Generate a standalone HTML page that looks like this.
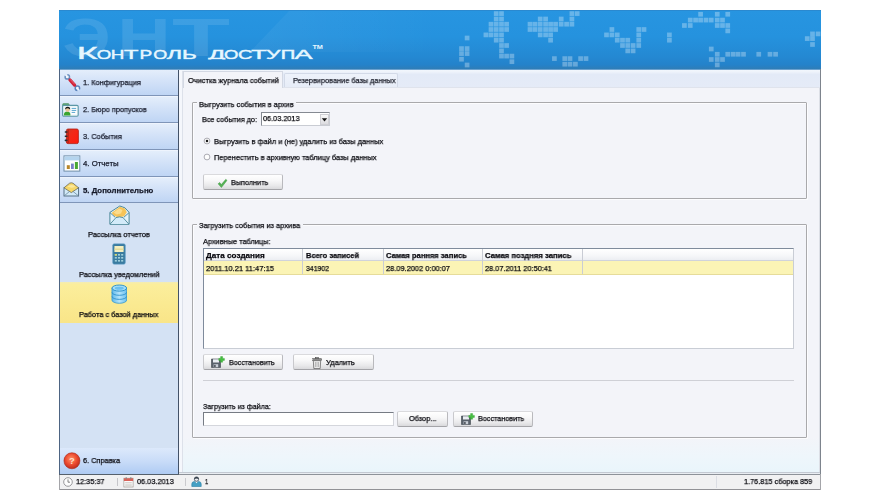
<!DOCTYPE html>
<html lang="ru"><head><meta charset="utf-8"><title>Контроль доступа</title><style>
html,body{margin:0;padding:0;background:#fff;}
body{width:880px;height:500px;position:relative;overflow:hidden;font-family:"Liberation Sans", sans-serif;}
.t{position:absolute;white-space:nowrap;-webkit-text-stroke:0.25px currentColor;will-change:transform;line-height:12px;height:12px;transform-origin:0 50%;font-family:"Liberation Sans", sans-serif;}
</style></head>
<body>
<div style="position:absolute;left:59.00px;top:10.00px;width:762.00px;height:59.00px;background:linear-gradient(#2795e1 0%,#2592de 45%,#2488d2 80%,#2482ca 93%,#2a7fbf 97%,#2f7db6 100%);overflow:hidden"></div>
<svg style="position:absolute;left:0;top:0" width="880" height="500" viewBox="0 0 880 500">
<g fill="#ffffff" fill-opacity="0.30">
<rect x="464.75" y="35.65" width="4.7" height="4.7"/>
<rect x="459.15" y="46.25" width="4.7" height="4.7"/>
<rect x="464.75" y="46.25" width="4.7" height="4.7"/>
<rect x="459.15" y="51.25" width="4.7" height="4.7"/>
<rect x="464.75" y="51.25" width="4.7" height="4.7"/>
<rect x="459.15" y="56.85" width="4.7" height="4.7"/>
<rect x="464.75" y="62.65" width="4.7" height="4.7"/>
<rect x="493.85" y="11.25" width="4.7" height="4.7"/>
<rect x="499.15" y="11.25" width="4.7" height="4.7"/>
<rect x="493.85" y="16.65" width="4.7" height="4.7"/>
<rect x="499.15" y="16.65" width="4.7" height="4.7"/>
<rect x="488.65" y="21.85" width="4.7" height="4.7"/>
<rect x="493.85" y="21.85" width="4.7" height="4.7"/>
<rect x="499.15" y="21.85" width="4.7" height="4.7"/>
<rect x="504.25" y="21.85" width="4.7" height="4.7"/>
<rect x="488.65" y="27.15" width="4.7" height="4.7"/>
<rect x="493.85" y="27.15" width="4.7" height="4.7"/>
<rect x="499.15" y="27.15" width="4.7" height="4.7"/>
<rect x="504.25" y="27.15" width="4.7" height="4.7"/>
<rect x="483.55" y="32.55" width="4.7" height="4.7"/>
<rect x="488.65" y="32.55" width="4.7" height="4.7"/>
<rect x="493.85" y="32.55" width="4.7" height="4.7"/>
<rect x="499.15" y="32.55" width="4.7" height="4.7"/>
<rect x="493.85" y="37.85" width="4.7" height="4.7"/>
<rect x="499.15" y="37.85" width="4.7" height="4.7"/>
<rect x="499.15" y="43.15" width="4.7" height="4.7"/>
<rect x="504.25" y="43.15" width="4.7" height="4.7"/>
<rect x="499.15" y="48.55" width="4.7" height="4.7"/>
<rect x="499.15" y="53.75" width="4.7" height="4.7"/>
<rect x="504.25" y="53.75" width="4.7" height="4.7"/>
<rect x="509.55" y="53.75" width="4.7" height="4.7"/>
<rect x="509.55" y="59.35" width="4.7" height="4.7"/>
<rect x="569.55" y="11.25" width="4.7" height="4.7"/>
<rect x="574.85" y="11.25" width="4.7" height="4.7"/>
<rect x="537.85" y="16.65" width="4.7" height="4.7"/>
<rect x="543.25" y="16.65" width="4.7" height="4.7"/>
<rect x="558.85" y="16.65" width="4.7" height="4.7"/>
<rect x="569.55" y="16.65" width="4.7" height="4.7"/>
<rect x="527.65" y="21.85" width="4.7" height="4.7"/>
<rect x="532.65" y="21.85" width="4.7" height="4.7"/>
<rect x="537.85" y="21.85" width="4.7" height="4.7"/>
<rect x="543.25" y="21.85" width="4.7" height="4.7"/>
<rect x="548.25" y="21.85" width="4.7" height="4.7"/>
<rect x="553.25" y="21.85" width="4.7" height="4.7"/>
<rect x="558.85" y="21.85" width="4.7" height="4.7"/>
<rect x="564.25" y="21.85" width="4.7" height="4.7"/>
<rect x="569.55" y="21.85" width="4.7" height="4.7"/>
<rect x="527.65" y="27.15" width="4.7" height="4.7"/>
<rect x="532.65" y="27.15" width="4.7" height="4.7"/>
<rect x="537.85" y="27.15" width="4.7" height="4.7"/>
<rect x="543.25" y="27.15" width="4.7" height="4.7"/>
<rect x="548.25" y="27.15" width="4.7" height="4.7"/>
<rect x="553.25" y="27.15" width="4.7" height="4.7"/>
<rect x="537.85" y="32.55" width="4.7" height="4.7"/>
<rect x="543.25" y="32.55" width="4.7" height="4.7"/>
<rect x="548.25" y="32.55" width="4.7" height="4.7"/>
<rect x="548.25" y="37.85" width="4.7" height="4.7"/>
<rect x="552.05" y="56.25" width="4.7" height="4.7"/>
<rect x="562.40" y="56.25" width="4.7" height="4.7"/>
<rect x="567.65" y="56.25" width="4.7" height="4.7"/>
<rect x="578.25" y="56.25" width="4.7" height="4.7"/>
<rect x="583.65" y="56.25" width="4.7" height="4.7"/>
<rect x="562.40" y="61.85" width="4.7" height="4.7"/>
<rect x="567.65" y="61.85" width="4.7" height="4.7"/>
<rect x="573.05" y="61.85" width="4.7" height="4.7"/>
<rect x="609.55" y="27.15" width="4.7" height="4.7"/>
<rect x="636.40" y="27.15" width="4.7" height="4.7"/>
<rect x="641.65" y="27.15" width="4.7" height="4.7"/>
<rect x="604.15" y="32.55" width="4.7" height="4.7"/>
<rect x="609.55" y="32.55" width="4.7" height="4.7"/>
<rect x="614.90" y="32.55" width="4.7" height="4.7"/>
<rect x="636.40" y="32.55" width="4.7" height="4.7"/>
<rect x="614.90" y="37.85" width="4.7" height="4.7"/>
<rect x="620.15" y="37.85" width="4.7" height="4.7"/>
<rect x="625.40" y="37.85" width="4.7" height="4.7"/>
<rect x="636.40" y="37.85" width="4.7" height="4.7"/>
<rect x="620.15" y="43.15" width="4.7" height="4.7"/>
<rect x="625.40" y="43.15" width="4.7" height="4.7"/>
<rect x="630.75" y="43.15" width="4.7" height="4.7"/>
<rect x="636.40" y="43.15" width="4.7" height="4.7"/>
<rect x="625.40" y="48.55" width="4.7" height="4.7"/>
<rect x="630.75" y="48.55" width="4.7" height="4.7"/>
<rect x="667.05" y="32.55" width="4.7" height="4.7"/>
<rect x="667.05" y="37.85" width="4.7" height="4.7"/>
<rect x="698.25" y="11.90" width="4.7" height="4.7"/>
<rect x="714.90" y="11.90" width="4.7" height="4.7"/>
<rect x="725.40" y="11.90" width="4.7" height="4.7"/>
<rect x="687.90" y="17.75" width="4.7" height="4.7"/>
<rect x="693.25" y="17.75" width="4.7" height="4.7"/>
<rect x="698.25" y="17.75" width="4.7" height="4.7"/>
<rect x="703.65" y="17.75" width="4.7" height="4.7"/>
<rect x="708.90" y="17.75" width="4.7" height="4.7"/>
<rect x="714.90" y="17.75" width="4.7" height="4.7"/>
<rect x="720.15" y="17.75" width="4.7" height="4.7"/>
<rect x="682.05" y="23.15" width="4.7" height="4.7"/>
<rect x="687.90" y="23.15" width="4.7" height="4.7"/>
<rect x="714.90" y="23.15" width="4.7" height="4.7"/>
<rect x="720.15" y="23.15" width="4.7" height="4.7"/>
<rect x="725.40" y="23.15" width="4.7" height="4.7"/>
<rect x="725.40" y="28.55" width="4.7" height="4.7"/>
<rect x="708.90" y="46.65" width="4.7" height="4.7"/>
<rect x="714.90" y="51.90" width="4.7" height="4.7"/>
<rect x="725.40" y="51.90" width="4.7" height="4.7"/>
<rect x="730.75" y="51.90" width="4.7" height="4.7"/>
<rect x="735.75" y="51.90" width="4.7" height="4.7"/>
<rect x="741.15" y="51.90" width="4.7" height="4.7"/>
<rect x="756.40" y="51.90" width="4.7" height="4.7"/>
<rect x="767.65" y="51.90" width="4.7" height="4.7"/>
<rect x="773.25" y="51.90" width="4.7" height="4.7"/>
<rect x="708.90" y="57.15" width="4.7" height="4.7"/>
<rect x="714.90" y="57.15" width="4.7" height="4.7"/>
<rect x="720.15" y="57.15" width="4.7" height="4.7"/>
<rect x="714.90" y="62.55" width="4.7" height="4.7"/>
<rect x="810.15" y="31.55" width="4.7" height="4.7"/>
<rect x="815.75" y="31.55" width="4.7" height="4.7"/>
<rect x="804.90" y="36.25" width="4.7" height="4.7"/>
<rect x="810.15" y="36.25" width="4.7" height="4.7"/>
<rect x="810.15" y="42.15" width="4.7" height="4.7"/>
</g>
<defs><linearGradient id="gl" x1="0" y1="0" x2="1" y2="0"><stop offset="0" stop-color="#fff" stop-opacity="0.05"/><stop offset="1" stop-color="#fff" stop-opacity="0"/></linearGradient></defs>
<polygon points="290,10 440,10 440,52 250,52" fill="url(#gl)"/>
<g fill="#ffffff" fill-opacity="0.11" font-family='"Liberation Sans", sans-serif' font-weight="bold" font-size="54">
<text x="62.5" y="55.5" textLength="48.0" lengthAdjust="spacingAndGlyphs">Э</text>
<text x="117.5" y="55.5" textLength="53.0" lengthAdjust="spacingAndGlyphs">Н</text>
<text x="172" y="55.5" textLength="58" lengthAdjust="spacingAndGlyphs">Т</text>
</g>
<defs><clipPath id="tc"><rect x="70" y="40" width="260" height="19.5"/></clipPath></defs>
<g fill="#e6f7ff" clip-path="url(#tc)" font-family='"Liberation Sans", sans-serif'>
<text x="76.71" y="58.7" font-size="17.3" textLength="20.98" lengthAdjust="spacingAndGlyphs" stroke="#e6f7ff" stroke-width="0.4">К</text>
<text x="96.69" y="58.7" font-size="12.8" textLength="14.52" lengthAdjust="spacingAndGlyphs" stroke="#e6f7ff" stroke-width="0.4">О</text>
<text x="110.88" y="58.7" font-size="12.8" textLength="13.54" lengthAdjust="spacingAndGlyphs" stroke="#e6f7ff" stroke-width="0.4">Н</text>
<text x="124.10" y="58.7" font-size="12.8" textLength="14.40" lengthAdjust="spacingAndGlyphs" stroke="#e6f7ff" stroke-width="0.4">Т</text>
<text x="139.46" y="58.7" font-size="12.8" textLength="12.69" lengthAdjust="spacingAndGlyphs" stroke="#e6f7ff" stroke-width="0.4">Р</text>
<text x="153.24" y="58.7" font-size="12.8" textLength="14.03" lengthAdjust="spacingAndGlyphs" stroke="#e6f7ff" stroke-width="0.4">О</text>
<text x="166.81" y="58.7" font-size="12.8" textLength="15.37" lengthAdjust="spacingAndGlyphs" stroke="#e6f7ff" stroke-width="0.4">Л</text>
<text x="182.07" y="58.7" font-size="12.8" textLength="14.76" lengthAdjust="spacingAndGlyphs" stroke="#e6f7ff" stroke-width="0.4">Ь</text>
<text x="208.26" y="58.7" font-size="12.8" textLength="17.08" lengthAdjust="spacingAndGlyphs" stroke="#e6f7ff" stroke-width="0.4">Д</text>
<text x="224.00" y="58.7" font-size="12.8" textLength="14.40" lengthAdjust="spacingAndGlyphs" stroke="#e6f7ff" stroke-width="0.4">О</text>
<text x="238.00" y="58.7" font-size="12.8" textLength="14.40" lengthAdjust="spacingAndGlyphs" stroke="#e6f7ff" stroke-width="0.4">С</text>
<text x="251.21" y="58.7" font-size="12.8" textLength="15.37" lengthAdjust="spacingAndGlyphs" stroke="#e6f7ff" stroke-width="0.4">Т</text>
<text x="266.10" y="58.7" font-size="12.8" textLength="14.40" lengthAdjust="spacingAndGlyphs" stroke="#e6f7ff" stroke-width="0.4">У</text>
<text x="280.79" y="58.7" font-size="12.8" textLength="14.52" lengthAdjust="spacingAndGlyphs" stroke="#e6f7ff" stroke-width="0.4">П</text>
<text x="294.57" y="58.7" font-size="12.8" textLength="18.06" lengthAdjust="spacingAndGlyphs" stroke="#e6f7ff" stroke-width="0.4">А</text>
<text x="312.4" y="49.3" font-size="5.4" font-weight="bold" textLength="10.6" lengthAdjust="spacingAndGlyphs">TM</text>
</g>
</svg>
<div style="position:absolute;left:59.00px;top:69.00px;width:120.00px;height:405.00px;background:#d4e2f4"></div>
<div style="position:absolute;left:59.00px;top:69.00px;width:120.00px;height:27.00px;background:linear-gradient(#e4eefb 0%,#d3e2f8 45%,#bfd5f4 100%);border-top:1px solid #eef4fd;border-bottom:1px solid #7f95b8;box-sizing:border-box"></div>
<span class="t " style="left:83.40px;top:77.32px;font-size:7.8px;color:#161a2a;transform:scaleX(0.9508)">1. Конфигурация</span>
<div style="position:absolute;left:59.00px;top:96.00px;width:120.00px;height:27.00px;background:linear-gradient(#e4eefb 0%,#d3e2f8 45%,#bfd5f4 100%);border-top:1px solid #eef4fd;border-bottom:1px solid #7f95b8;box-sizing:border-box"></div>
<span class="t " style="left:83.40px;top:104.32px;font-size:7.8px;color:#161a2a;transform:scaleX(0.9453)">2. Бюро пропусков</span>
<div style="position:absolute;left:59.00px;top:123.00px;width:120.00px;height:27.00px;background:linear-gradient(#e4eefb 0%,#d3e2f8 45%,#bfd5f4 100%);border-top:1px solid #eef4fd;border-bottom:1px solid #7f95b8;box-sizing:border-box"></div>
<span class="t " style="left:83.40px;top:131.32px;font-size:7.8px;color:#161a2a;transform:scaleX(0.9520)">3. События</span>
<div style="position:absolute;left:59.00px;top:150.00px;width:120.00px;height:27.00px;background:linear-gradient(#e4eefb 0%,#d3e2f8 45%,#bfd5f4 100%);border-top:1px solid #eef4fd;border-bottom:1px solid #7f95b8;box-sizing:border-box"></div>
<span class="t " style="left:83.40px;top:158.32px;font-size:7.8px;color:#161a2a;transform:scaleX(0.9993)">4. Отчеты</span>
<div style="position:absolute;left:59.00px;top:177.00px;width:120.00px;height:26.00px;background:linear-gradient(#e4eefb 0%,#d3e2f8 45%,#bfd5f4 100%);border-top:1px solid #eef4fd;border-bottom:1px solid #7f95b8;box-sizing:border-box"></div>
<span class="t " style="left:83.40px;top:184.82px;font-size:7.8px;font-weight:bold;color:#161a2a;transform:scaleX(1.0030)">5. Дополнительно</span>
<div style="position:absolute;left:59.00px;top:281.50px;width:120.00px;height:41.50px;background:linear-gradient(#f3ecb4 0%,#fbee9c 6%,#faea92 50%,#f9e588 100%)"></div>
<span class="t " style="left:88.00px;top:229.42px;font-size:7.8px;color:#08080e;transform:scaleX(0.9485)">Рассылка отчетов</span>
<span class="t " style="left:78.80px;top:268.92px;font-size:7.8px;color:#08080e;transform:scaleX(0.9417)">Рассылка уведомлений</span>
<span class="t " style="left:79.40px;top:309.22px;font-size:7.8px;color:#08080e;transform:scaleX(0.9458)">Работа с базой данных</span>
<div style="position:absolute;left:59.00px;top:448.00px;width:120.00px;height:26.00px;background:linear-gradient(#dce9fb 0%,#c9dcf8 50%,#afcbf3 100%)"></div>
<span class="t " style="left:83.00px;top:455.02px;font-size:7.8px;color:#08080e;transform:scaleX(0.9423)">6. Справка</span>
<div style="position:absolute;left:59.00px;top:69.00px;width:1.00px;height:421.00px;background:#4d6482"></div>
<div style="position:absolute;left:178.00px;top:69.00px;width:1.00px;height:405.00px;background:#435268"></div>
<div style="position:absolute;left:179.00px;top:69.00px;width:642.00px;height:404.00px;background:linear-gradient(#f3f4f9 0%,#f3f4f9 91%,#eef6fb 96%,#e9f5fb 100%)"></div>
<div style="position:absolute;left:179.00px;top:69.00px;width:642.00px;height:19.00px;background:linear-gradient(#f4f8fd 0%,#eef3fb 15%,#e3eaf7 28%,#e5ebf7 100%)"></div>
<div style="position:absolute;left:284.00px;top:73.00px;width:114.00px;height:15.00px;background:linear-gradient(#eef3fb,#e6ecf7);border:1px solid #d3dae8;border-bottom:none;border-radius:2px 2px 0 0;box-sizing:border-box"></div>
<div style="position:absolute;left:59.00px;top:69.00px;width:762.00px;height:1.00px;background:#6aa1cf"></div>
<div style="position:absolute;left:59.00px;top:10.00px;width:762.00px;height:1.00px;background:#2a89d0"></div>
<div style="position:absolute;left:182.50px;top:71.00px;width:100.90px;height:17.00px;background:#f3f4f9;border:1px solid #d3d8e3;border-bottom:none;box-sizing:border-box"></div>
<div style="position:absolute;left:283.40px;top:87.00px;width:537.60px;height:1.00px;background:#dfe3ec"></div>
<span class="t " style="left:188.00px;top:75.12px;font-size:7.8px;color:#08080e;transform:scaleX(0.9483)">Очистка журнала событий</span>
<span class="t " style="left:292.80px;top:75.12px;font-size:7.8px;color:#1c1f2b;transform:scaleX(0.9421)">Резервирование базы данных</span>
<div style="position:absolute;left:179.00px;top:70.00px;width:3.00px;height:403.00px;background:#f5f7fc"></div>
<div style="position:absolute;left:182.00px;top:71.00px;width:1.00px;height:401.00px;background:#dde1ea"></div>
<div style="position:absolute;left:818.50px;top:88.00px;width:1.00px;height:385.00px;background:#dcdfe6"></div>
<div style="position:absolute;left:192.00px;top:102.00px;width:615.00px;height:97.00px;border:1px solid #a9a9ac;box-sizing:border-box;border-radius:1px;box-shadow:1px 1px 0 #fcfcfe, inset 1px 1px 0 #fcfcfe"></div>
<div style="position:absolute;left:196.50px;top:97.00px;width:99.00px;height:12.00px;background:#f3f4f9"></div>
<span class="t " style="left:198.60px;top:98.62px;font-size:7.8px;color:#08080e;transform:scaleX(0.9505)">Выгрузить события в архив</span>
<span class="t " style="left:202.00px;top:113.72px;font-size:7.8px;color:#08080e;transform:scaleX(0.9263)">Все события до:</span>
<div style="position:absolute;left:261.00px;top:112.00px;width:69.00px;height:14.00px;background:#fff;border:1px solid #858a92;border-right-color:#c9ccd3;border-bottom-color:#c9ccd3;box-sizing:border-box"></div>
<span class="t " style="left:263.00px;top:113.42px;font-size:7.8px;color:#08080e;transform:scaleX(0.9377)">06.03.2013</span>
<div style="position:absolute;left:320.00px;top:114.00px;width:9.00px;height:11.00px;background:linear-gradient(#f8f8f8,#dcdce0);border:1px solid #cfcfd4;box-sizing:border-box"></div>
<svg style="position:absolute;left:320px;top:114px" width="9" height="11"><path d="M1.8 4.2 L7.2 4.2 L4.5 7.4 Z" fill="#151515"/></svg>
<svg style="position:absolute;left:201.00px;top:135.40px" width="12" height="12"><circle cx="6" cy="6" r="2.9" fill="#fdfdfd" stroke="#a3a3aa" stroke-width="0.9"/><circle cx="6" cy="6" r="1.25" fill="#1a1a1a"/></svg>
<svg style="position:absolute;left:201.00px;top:151.10px" width="12" height="12"><circle cx="6" cy="6" r="2.9" fill="#fdfdfd" stroke="#a3a3aa" stroke-width="0.9"/></svg>
<span class="t " style="left:213.80px;top:136.22px;font-size:7.8px;color:#08080e;transform:scaleX(0.9485)">Выгрузить в файл и (не) удалить из базы данных</span>
<span class="t " style="left:213.80px;top:151.82px;font-size:7.8px;color:#08080e;transform:scaleX(0.9523)">Перенестить в архивную таблицу базы данных</span>
<div style="position:absolute;left:203.00px;top:174.00px;width:80.00px;height:16.00px;background:linear-gradient(#ffffff 0%,#f7f7f8 40%,#e9e9eb 75%,#d9d9dc 100%);border:1px solid #c9c9cd;border-top-color:#dadadd;border-bottom-color:#a4a4a8;border-right-color:#b9b9bd;box-sizing:border-box;border-radius:2px"></div>
<svg style="position:absolute;left:217px;top:177.6px" width="11" height="11" viewBox="0 0 12 12"><path d="M1.2 6.4 L2.9 4.9 L4.7 7.2 L9.6 1.4 L10.9 2.6 L4.8 10.4 Z" fill="#55b254" stroke="#3a9640" stroke-width="0.5"/></svg>
<span class="t " style="left:231.30px;top:176.82px;font-size:7.8px;color:#08080e;transform:scaleX(0.9289)">Выполнить</span>
<div style="position:absolute;left:192.00px;top:224.00px;width:615.00px;height:214.00px;border:1px solid #a9a9ac;box-sizing:border-box;border-radius:1px;box-shadow:1px 1px 0 #fcfcfe, inset 1px 1px 0 #fcfcfe"></div>
<div style="position:absolute;left:196.50px;top:219.00px;width:106.00px;height:12.00px;background:#f3f4f9"></div>
<span class="t " style="left:198.80px;top:220.02px;font-size:7.8px;color:#08080e;transform:scaleX(0.9564)">Загрузить события из архива</span>
<span class="t " style="left:202.50px;top:236.02px;font-size:7.8px;color:#08080e;transform:scaleX(0.9461)">Архивные таблицы:</span>
<div style="position:absolute;left:203.00px;top:248.00px;width:591.00px;height:101.00px;background:#fff;border:1px solid #7f8b9c;border-right-color:#c9cdd5;border-bottom-color:#c9cdd5;box-sizing:border-box"></div>
<div style="position:absolute;left:204.00px;top:249.00px;width:589.00px;height:12.00px;background:linear-gradient(#ffffff,#f6f7f9 60%,#eceef2);border-bottom:1px solid #d0d3db;box-sizing:border-box"></div>
<div style="position:absolute;left:204.00px;top:261.00px;width:589.00px;height:14.00px;background:#fbf4b5;border-bottom:1px solid #e6dc9a;box-sizing:border-box"></div>
<div style="position:absolute;left:302.00px;top:249.00px;width:1.00px;height:25.00px;background:#c9ccd4"></div>
<div style="position:absolute;left:383.00px;top:249.00px;width:1.00px;height:25.00px;background:#c9ccd4"></div>
<div style="position:absolute;left:482.00px;top:249.00px;width:1.00px;height:25.00px;background:#c9ccd4"></div>
<div style="position:absolute;left:582.00px;top:249.00px;width:1.00px;height:25.00px;background:#c9ccd4"></div>
<span class="t " style="left:205.80px;top:250.02px;font-size:7.8px;font-weight:bold;color:#08080e;transform:scaleX(1.0404)">Дата создания</span>
<span class="t " style="left:305.80px;top:250.02px;font-size:7.8px;font-weight:bold;color:#08080e;transform:scaleX(0.9555)">Всего записей</span>
<span class="t " style="left:385.50px;top:250.02px;font-size:7.8px;font-weight:bold;color:#08080e;transform:scaleX(0.9698)">Самая ранняя запись</span>
<span class="t " style="left:485.00px;top:250.02px;font-size:7.8px;font-weight:bold;color:#08080e;transform:scaleX(0.9840)">Самая поздняя запись</span>
<span class="t " style="left:205.80px;top:262.92px;font-size:7.8px;color:#08080e;transform:scaleX(0.9660)">2011.10.21 11:47:15</span>
<span class="t " style="left:305.80px;top:262.92px;font-size:7.8px;color:#08080e;transform:scaleX(0.8836)">341902</span>
<span class="t " style="left:385.50px;top:262.92px;font-size:7.8px;color:#08080e;transform:scaleX(0.9523)">28.09.2002 0:00:07</span>
<span class="t " style="left:485.00px;top:262.92px;font-size:7.8px;color:#08080e;transform:scaleX(0.9441)">28.07.2011 20:50:41</span>
<div style="position:absolute;left:203.00px;top:354.00px;width:80.00px;height:16.00px;background:linear-gradient(#ffffff 0%,#f7f7f8 40%,#e9e9eb 75%,#d9d9dc 100%);border:1px solid #c9c9cd;border-top-color:#dadadd;border-bottom-color:#a4a4a8;border-right-color:#b9b9bd;box-sizing:border-box;border-radius:2px"></div>
<div style="position:absolute;left:293.00px;top:354.00px;width:81.00px;height:16.00px;background:linear-gradient(#ffffff 0%,#f7f7f8 40%,#e9e9eb 75%,#d9d9dc 100%);border:1px solid #c9c9cd;border-top-color:#dadadd;border-bottom-color:#a4a4a8;border-right-color:#b9b9bd;box-sizing:border-box;border-radius:2px"></div>
<svg style="position:absolute;left:210.80px;top:356.00px" width="15" height="12" viewBox="0 0 15 12"><path d="M0.5 3 H9.5 V11.5 H0.5 Z" fill="#59616b" stroke="#3d444c" stroke-width="0.6"/><rect x="2" y="3.3" width="6" height="3.2" fill="#e9edf2"/><rect x="2.6" y="8.2" width="4.6" height="3" fill="#c9ced6"/><rect x="3.2" y="8.8" width="1.4" height="2.2" fill="#3d444c"/><path d="M9.6 0.6 H11.6 V2.4 H13.4 V4.4 H11.6 V6.2 H9.6 V4.4 H7.8 V2.4 H9.6 Z" fill="#46c040" stroke="#2f9a30" stroke-width="0.4"/></svg>
<span class="t " style="left:228.80px;top:356.82px;font-size:7.8px;color:#08080e;transform:scaleX(0.9151)">Восстановить</span>
<svg style="position:absolute;left:311.80px;top:356.80px" width="10" height="12" viewBox="0 0 10 12"><rect x="3.4" y="0.4" width="3.2" height="1.4" fill="none" stroke="#555" stroke-width="0.7"/><rect x="0.5" y="1.7" width="9" height="1.6" fill="#8a8a8a" stroke="#505050" stroke-width="0.6"/><path d="M1.3 3.6 H8.7 L8.2 11.5 H1.8 Z" fill="#e9e9e9" stroke="#5a5a5a" stroke-width="0.7"/><path d="M3.5 5 V10 M5 5 V10 M6.5 5 V10" stroke="#9a9a9a" stroke-width="0.6"/></svg>
<span class="t " style="left:326.30px;top:356.82px;font-size:7.8px;color:#08080e;transform:scaleX(0.9637)">Удалить</span>
<div style="position:absolute;left:203.00px;top:380.00px;width:591.00px;height:1.00px;background:#cfd0d6"></div>
<span class="t " style="left:202.50px;top:401.22px;font-size:7.8px;color:#08080e;transform:scaleX(0.9158)">Загрузить из файла:</span>
<div style="position:absolute;left:203.00px;top:412.00px;width:191.00px;height:14.00px;background:#fff;border:1px solid #767b84;border-right-color:#d4d6dc;border-bottom-color:#d4d6dc;box-sizing:border-box"></div>
<div style="position:absolute;left:397.00px;top:411.00px;width:51.00px;height:16.00px;background:linear-gradient(#ffffff 0%,#f7f7f8 40%,#e9e9eb 75%,#d9d9dc 100%);border:1px solid #c9c9cd;border-top-color:#dadadd;border-bottom-color:#a4a4a8;border-right-color:#b9b9bd;box-sizing:border-box;border-radius:2px"></div>
<span class="t " style="left:408.80px;top:413.42px;font-size:7.8px;color:#08080e;transform:scaleX(0.9473)">Обзор...</span>
<div style="position:absolute;left:453.00px;top:411.00px;width:80.00px;height:16.00px;background:linear-gradient(#ffffff 0%,#f7f7f8 40%,#e9e9eb 75%,#d9d9dc 100%);border:1px solid #c9c9cd;border-top-color:#dadadd;border-bottom-color:#a4a4a8;border-right-color:#b9b9bd;box-sizing:border-box;border-radius:2px"></div>
<svg style="position:absolute;left:461.00px;top:412.80px" width="15" height="12" viewBox="0 0 15 12"><path d="M0.5 3 H9.5 V11.5 H0.5 Z" fill="#59616b" stroke="#3d444c" stroke-width="0.6"/><rect x="2" y="3.3" width="6" height="3.2" fill="#e9edf2"/><rect x="2.6" y="8.2" width="4.6" height="3" fill="#c9ced6"/><rect x="3.2" y="8.8" width="1.4" height="2.2" fill="#3d444c"/><path d="M9.6 0.6 H11.6 V2.4 H13.4 V4.4 H11.6 V6.2 H9.6 V4.4 H7.8 V2.4 H9.6 Z" fill="#46c040" stroke="#2f9a30" stroke-width="0.4"/></svg>
<span class="t " style="left:478.30px;top:413.42px;font-size:7.8px;color:#08080e;transform:scaleX(0.9252)">Восстановить</span>
<div style="position:absolute;left:59.00px;top:474.00px;width:762.00px;height:16.00px;background:#f1f1f2;border-top:1px solid #8d9299;border-bottom:1px solid #929296;box-sizing:border-box"></div>
<div style="position:absolute;left:179.00px;top:472.00px;width:642.00px;height:1.00px;background:#c3c9d2"></div>
<div style="position:absolute;left:179.00px;top:473.00px;width:642.00px;height:1.00px;background:#e9edf2"></div>
<div style="position:absolute;left:59.00px;top:69.00px;width:1.00px;height:421.00px;background:#4d6482"></div>
<div style="position:absolute;left:59.00px;top:474.00px;width:120.00px;height:1.00px;background:#55606c"></div>
<div style="position:absolute;left:820.00px;top:69.00px;width:1.00px;height:405.00px;background:#7d848d"></div>
<div style="position:absolute;left:820.00px;top:474.00px;width:1.00px;height:16.00px;background:#a4a5a9"></div>
<div style="position:absolute;left:59.00px;top:475.00px;width:1.00px;height:15.00px;background:#a4a5a9"></div>
<svg style="position:absolute;left:61.5px;top:476px" width="12" height="12" viewBox="0 0 12 12"><circle cx="6" cy="6" r="4.3" fill="#fdfdfd" stroke="#8f8f92" stroke-width="0.9"/><path d="M6 3.4 V6.2 H8" fill="none" stroke="#666" stroke-width="0.8"/></svg>
<span class="t " style="left:76.40px;top:476.02px;font-size:7.8px;color:#08080e;transform:scaleX(0.9388)">12:35:37</span>
<div style="position:absolute;left:116.50px;top:478.00px;width:1.00px;height:8.00px;background:#c6c6ca"></div>
<svg style="position:absolute;left:123px;top:477px" width="11" height="11" viewBox="0 0 11 11"><rect x="0.9" y="1.2" width="9.2" height="8.8" fill="#fbfbfb" stroke="#a39a94" stroke-width="0.7"/><rect x="0.9" y="1.2" width="9.2" height="2.8" fill="#d9635a"/><path d="M2.2 5.6 H8.8 M2.2 7.2 H8.8 M2.2 8.7 H8.8" stroke="#c4beb8" stroke-width="0.7"/><rect x="2.6" y="0.3" width="1.2" height="1.9" fill="#8a8480"/><rect x="7.2" y="0.3" width="1.2" height="1.9" fill="#8a8480"/></svg>
<span class="t " style="left:137.00px;top:476.02px;font-size:7.8px;color:#08080e;transform:scaleX(0.9428)">06.03.2013</span>
<div style="position:absolute;left:185.00px;top:478.00px;width:1.00px;height:8.00px;background:#cacace"></div>
<svg style="position:absolute;left:190.5px;top:476.4px" width="11" height="11" viewBox="0 0 11 11"><path d="M0.8 10.5 V8 Q0.8 5.6 3.6 5.4 L5.5 7 L7.4 5.4 Q10.2 5.6 10.2 8 V10.5 Z" fill="#45a0c4" stroke="#2a7fa6" stroke-width="0.6"/><path d="M4.4 5.6 L5.5 7.4 L6.6 5.6 Z" fill="#eef6fa"/><circle cx="5.5" cy="3.1" r="2.2" fill="#e6e9ee" stroke="#3f4d5c" stroke-width="0.8"/><path d="M3.3 2.9 Q3.4 0.9 5.5 0.9 Q7.6 0.9 7.7 2.9 Q5.5 1.9 3.3 2.9 Z" fill="#2c3640"/></svg>
<span class="t " style="left:205.20px;top:476.02px;font-size:7.8px;color:#08080e;transform:scaleX(0.7367)">1</span>
<div style="position:absolute;left:715.60px;top:476.00px;width:0.80px;height:12.00px;background:#dcdee4"></div>
<span class="t " style="left:743.80px;top:475.52px;font-size:7.8px;color:#08080e;transform:scaleX(0.9387)">1.76.815 сборка 859</span>
<!-- sidebar icons -->
<svg style="position:absolute;left:64px;top:73px" width="17" height="19" viewBox="0 0 17 19">
  <path d="M4.6 5.2 L12.2 13.8" stroke="#a7bfdd" stroke-width="2" stroke-linecap="round" fill="none"/>
  <circle cx="3.3" cy="3.9" r="2.2" fill="#f2f7fd" stroke="#6a8fbf" stroke-width="1.5" stroke-dasharray="10.37 3.46" transform="rotate(-90 3.3 3.9)"/>
  <circle cx="13.4" cy="15.2" r="2.2" fill="#f2f7fd" stroke="#5a83bb" stroke-width="1.5" stroke-dasharray="10.37 3.46" transform="rotate(90 13.4 15.2)"/>
  <path d="M6 7 L10.6 12.1" stroke="#d02438" stroke-width="3.3" stroke-linecap="round" fill="none"/>
  <path d="M6.6 6.8 L10.4 11" stroke="#ee6576" stroke-width="0.9" stroke-linecap="round" fill="none"/>
</svg>
<svg style="position:absolute;left:62px;top:103px" width="17" height="14" viewBox="0 0 17 14">
  <path d="M0.6 3 V1.6 Q0.6 0.6 1.6 0.6 H6 Q7 0.6 7.2 1.6 L7.5 3 Z" fill="#62a56a" stroke="#4d8f6a" stroke-width="0.6"/>
  <rect x="0.6" y="2.4" width="15.6" height="10.8" rx="1.2" fill="#eaf4f7" stroke="#5b97a6" stroke-width="1.1"/>
  <rect x="9" y="4.2" width="5.8" height="7.2" fill="#ffffff"/>
  <path d="M9.6 5.4 H14.2 M9.6 7.4 H14.2 M9.6 9.4 H13.2" stroke="#58a6cf" stroke-width="1"/>
  <path d="M1.8 12.4 Q1.8 8.6 5.2 8.6 Q8.6 8.6 8.4 12.4 Z" fill="#3aa52f"/>
  <circle cx="5.6" cy="6.6" r="2.3" fill="#e8c69a"/>
  <path d="M3.1 6.6 Q3 3.6 5.8 3.7 Q8.4 3.8 8.1 6.4 Q6.6 5.2 4.6 5.4 Q3.6 5.6 3.1 6.6 Z" fill="#151515"/>
</svg>
<svg style="position:absolute;left:64px;top:128px" width="16" height="17" viewBox="0 0 16 17">
  <defs><linearGradient id="nb" x1="0" y1="0" x2="1" y2="1"><stop offset="0" stop-color="#c43a2a"/><stop offset="0.35" stop-color="#f02a18"/><stop offset="1" stop-color="#ff1a0c"/></linearGradient></defs>
  <rect x="2.4" y="1" width="12" height="14.6" rx="1.6" fill="url(#nb)" stroke="#b31d12" stroke-width="0.8"/>
  <rect x="3.4" y="1.6" width="1.6" height="13.4" fill="#a82218" opacity="0.7"/>
  <rect x="0.6" y="3.2" width="3" height="1.6" rx="0.8" fill="#2a2a30"/>
  <rect x="0.6" y="7.4" width="3" height="1.6" rx="0.8" fill="#2a2a30"/>
  <rect x="0.6" y="11.6" width="3" height="1.6" rx="0.8" fill="#2a2a30"/>
</svg>
<svg style="position:absolute;left:63px;top:154.5px" width="18" height="17" viewBox="0 0 18 17">
  <rect x="1" y="0.9" width="15.8" height="15.2" fill="#ffffff" stroke="#6f8ea8" stroke-width="1"/>
  <rect x="1.5" y="1.4" width="14.8" height="4" fill="#b4d4ee"/>
  <rect x="3.8" y="10.2" width="3" height="3.8" fill="#b8862a"/>
  <rect x="8" y="8.6" width="2.8" height="5.4" fill="#7a7fc8"/>
  <rect x="11.9" y="7" width="3" height="7" fill="#4aa832"/>
</svg>
<svg style="position:absolute;left:62.5px;top:181.5px" width="17" height="15" viewBox="0 0 17 15">
  <rect x="1" y="5.6" width="14.6" height="8.4" fill="#d2eaf8" stroke="#4d677c" stroke-width="0.9"/>
  <path d="M1 5.8 L6.6 1.2 Q8.3 0.4 10 1.2 L15.6 5.8 L8.3 10.6 Z" fill="#f6d768" stroke="#6b6a58" stroke-width="0.8"/>
  <path d="M4.2 4.6 Q8 1.6 12.2 4.4 Q9 6.8 4.2 4.6 Z" fill="#fbe79a"/>
  <path d="M1 14 L6.6 9.4 M15.6 14 L10 9.4" stroke="#6f8aa0" stroke-width="0.8" fill="none"/>
</svg>
<!-- sub icons -->
<svg style="position:absolute;left:108.5px;top:205px" width="22" height="21" viewBox="0 0 22 21">
  <path d="M0.9 7.4 L10.8 1 L15.9 2.8 L20.1 7.4 V19.3 H0.9 Z" fill="#e2f2fb" stroke="#4b8798" stroke-width="1" stroke-linejoin="round"/>
  <path d="M2.5 7.9 L10.8 1.8 L16 3.5 L17.8 7.2 L15.2 11.3 L9.4 12.4 L5 10.8 Z" fill="#f6c458"/>
  <path d="M4.6 7.6 L10 3.6 L13.4 5 L12 8.6 L7.6 9.6 Z" fill="#fbdc8c"/>
  <path d="M0.9 7.6 L6.3 12.4 M20.1 7.6 L14.7 12.4" stroke="#4b8798" stroke-width="0.9" fill="none"/>
  <path d="M1.2 19 L7 12.6 Q10.5 11.2 14 12.6 L19.8 19" fill="#d3ebf9" stroke="#4b8798" stroke-width="0.9" stroke-linejoin="round"/>
</svg>
<svg style="position:absolute;left:111.7px;top:243.3px" width="14" height="22" viewBox="0 0 15 22" preserveAspectRatio="none">
  <rect x="0.9" y="0.9" width="13.2" height="20.2" rx="1.4" fill="#3a7b9f" stroke="#4f93bd" stroke-width="0.8"/>
  <rect x="2.6" y="3" width="9.8" height="6" fill="#f4efc0"/>
  <rect x="2.6" y="5.6" width="9.8" height="1.2" fill="#e2d78f"/>
  <g fill="#9fd0dc"><rect x="3" y="11" width="2.2" height="1.6"/><rect x="6.4" y="11" width="2.2" height="1.6"/><rect x="9.8" y="11" width="2.2" height="1.6"/>
  <rect x="3" y="14" width="2.2" height="1.6"/><rect x="6.4" y="14" width="2.2" height="1.6"/><rect x="9.8" y="14" width="2.2" height="1.6"/>
  <rect x="3" y="17" width="2.2" height="1.6"/><rect x="6.4" y="17" width="2.2" height="1.6"/><rect x="9.8" y="17" width="2.2" height="1.6"/></g>
  <rect x="3" y="11" width="2.2" height="1.6" fill="#d8d86a"/>
</svg>
<svg style="position:absolute;left:110.5px;top:284px" width="16.6" height="20.4" viewBox="0 0 17 22" preserveAspectRatio="none">
  <defs><linearGradient id="dbg" x1="0" y1="0" x2="1" y2="0"><stop offset="0" stop-color="#5fb8ea"/><stop offset="0.5" stop-color="#b4e4fb"/><stop offset="1" stop-color="#6cc0ee"/></linearGradient></defs>
  <path d="M1 4.4 V17.4 A7.5 3.4 0 0 0 16 17.4 V4.4 Z" fill="url(#dbg)" stroke="#3a9ad2" stroke-width="0.9"/>
  <path d="M1 9 A7.5 3.2 0 0 0 16 9 M1 13.4 A7.5 3.2 0 0 0 16 13.4" fill="none" stroke="#2a8fca" stroke-width="0.9"/>
  <ellipse cx="8.5" cy="4.4" rx="7.5" ry="3.3" fill="#a5def8" stroke="#2a8fca" stroke-width="1"/>
  <ellipse cx="8.5" cy="4.6" rx="4.6" ry="1.6" fill="#6cc0ee"/>
</svg>
<!-- help icon -->
<svg style="position:absolute;left:63px;top:452px" width="18" height="18" viewBox="0 0 18 18">
  <defs><radialGradient id="hg" cx="0.45" cy="0.4" r="0.65"><stop offset="0" stop-color="#ff9468"/><stop offset="0.55" stop-color="#ec4a30"/><stop offset="1" stop-color="#b5281a"/></radialGradient></defs>
  <circle cx="8.95" cy="8.75" r="8" fill="url(#hg)" stroke="#a82a1c" stroke-width="0.6"/>
  <text x="8.95" y="12.2" text-anchor="middle" font-family='"Liberation Sans", sans-serif' font-weight="bold" font-size="9.5" fill="#ffe9dc" fill-opacity="0.92">?</text>
</svg>

</body></html>
